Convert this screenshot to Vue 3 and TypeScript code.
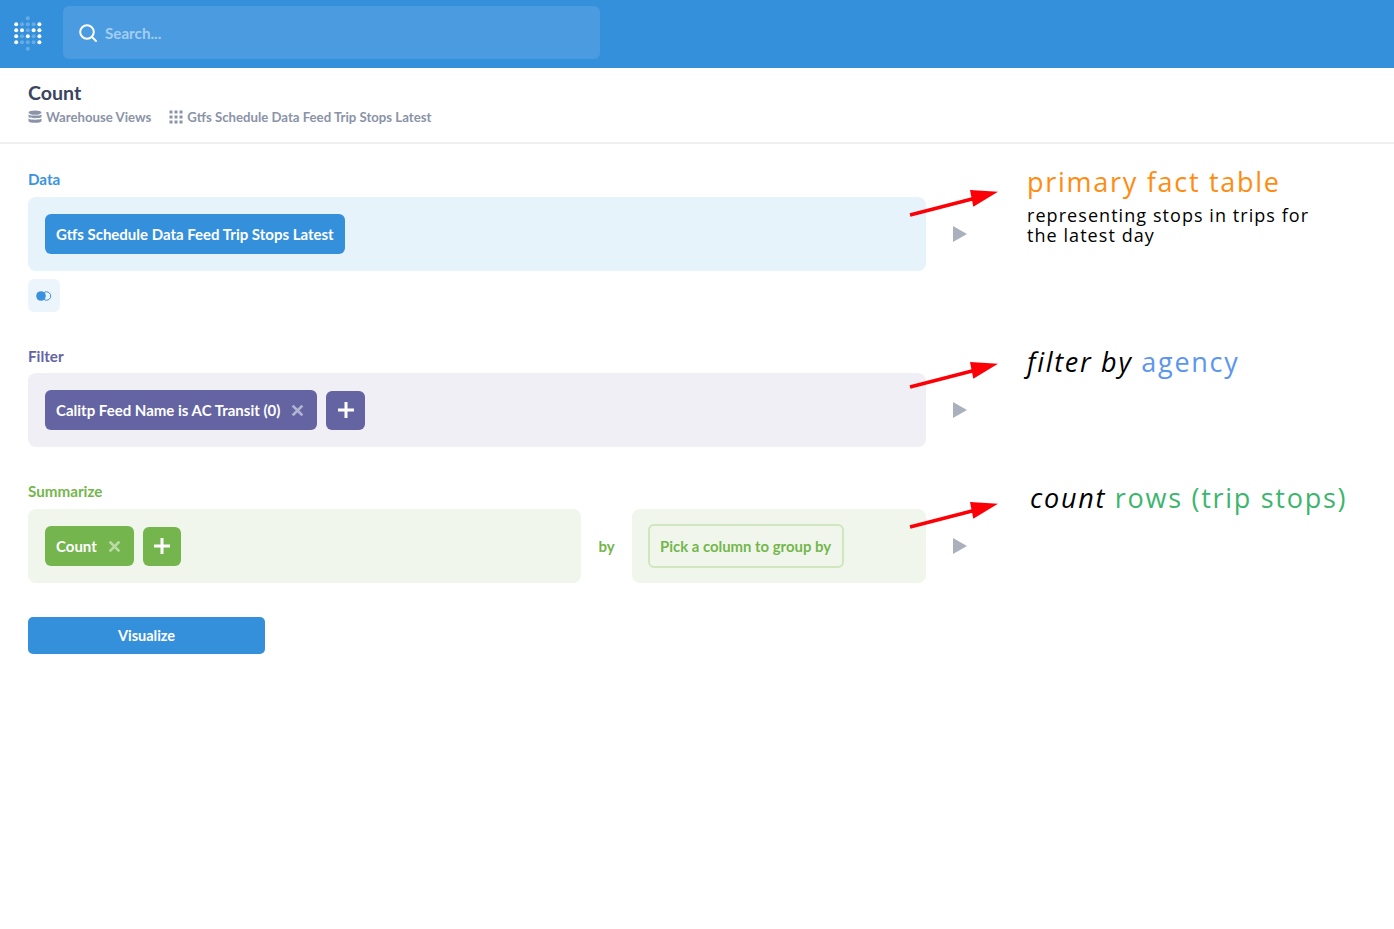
<script setup lang="ts">
const bright = new Set(['0,0', '0,1', '0,2', '0,3', '4,0', '4,1', '4,2', '4,3', '1,1', '3,1', '2,2'])
const dots: { x: number; y: number; on: boolean }[] = []
for (let c = 0; c < 5; c++) {
  for (let r = 0; r < 4; r++) {
    dots.push({ x: 2.2 + c * 5.8, y: 8.2 + r * 6, on: bright.has(`${c},${r}`) })
  }
}
const arrowTops = [187, 359, 499]
</script>

<template>
  <div class="page">
    <header class="topbar">
      <svg class="logo" width="30" height="36" viewBox="0 0 30 36">
        <circle cx="13.8" cy="2.3" r="2" fill="#fff" opacity=".25" />
        <circle cx="13.8" cy="32.7" r="2" fill="#fff" opacity=".25" />
        <circle
          v-for="(d, i) in dots"
          :key="i"
          :cx="d.x"
          :cy="d.y"
          r="2"
          fill="#fff"
          :opacity="d.on ? 1 : 0.25"
        />
      </svg>
      <div class="search">
        <svg width="20" height="20" viewBox="0 0 20 20" fill="none" stroke="#fff" stroke-width="2">
          <circle cx="9" cy="9" r="6.8" />
          <path d="M14 14l4 4" stroke-linecap="round" />
        </svg>
        <span>Search...</span>
      </div>
    </header>

    <section class="head">
      <h1>Count</h1>
      <div class="crumbs">
        <span class="crumb">
          <svg width="14" height="14" viewBox="0 0 14 14" fill="#8a93a8">
            <ellipse cx="7" cy="2.6" rx="6.5" ry="2.2" />
            <path d="M.5 4.4C1.5 6 12.5 6 13.5 4.4V7C12.5 8.6 1.5 8.6 .5 7zM.5 8.5C1.5 10.1 12.5 10.1 13.5 8.5V11.2C12.5 13.4 1.5 13.4 .5 11.2z" />
          </svg>
          Warehouse Views
        </span>
        <span class="crumb">
          <svg width="14" height="14" viewBox="0 0 14 14" fill="#8a93a8">
            <rect v-for="n in 9" :key="n" :x="0.5 + ((n - 1) % 3) * 5" :y="0.5 + Math.floor((n - 1) / 3) * 5" width="3" height="3" />
          </svg>
          Gtfs Schedule Data Feed Trip Stops Latest
        </span>
      </div>
    </section>

    <main class="body">
      <div class="step">
        <div class="label data-label">Data</div>
        <div class="row">
          <div class="panel data-panel wide">
            <span class="pill data-pill">Gtfs Schedule Data Feed Trip Stops Latest</span>
          </div>
          <span class="play"></span>
        </div>
        <div class="join">
          <svg width="16" height="10" viewBox="0 0 16 10">
            <circle cx="10.5" cy="5" r="4.2" fill="none" stroke="#3a91dc" stroke-width="1" />
            <circle cx="5" cy="5" r="4.8" fill="#3a91dc" />
          </svg>
        </div>
      </div>

      <div class="step filter-step">
        <div class="label filter-label">Filter</div>
        <div class="row">
          <div class="panel filter-panel wide">
            <span class="pill filter-pill">
              Calitp Feed Name is AC Transit (0)
              <svg class="x" width="13" height="13" viewBox="0 0 12 12"><path d="M1.5 1.5l9 9M10.5 1.5l-9 9" stroke="#fff" stroke-opacity=".5" stroke-width="2.6" /></svg>
            </span>
            <span class="add filter-pill">
              <svg width="18" height="18" viewBox="0 0 18 18"><path d="M9 1v16M1 9h16" stroke="#fff" stroke-width="3" /></svg>
            </span>
          </div>
          <span class="play"></span>
        </div>
      </div>

      <div class="step sum-step">
        <div class="label sum-label">Summarize</div>
        <div class="row">
          <div class="sum-row">
            <div class="panel sum-panel sum-left">
              <span class="pill green-pill">
                Count
                <svg class="x" width="13" height="13" viewBox="0 0 12 12"><path d="M1.5 1.5l9 9M10.5 1.5l-9 9" stroke="#fff" stroke-opacity=".5" stroke-width="2.6" /></svg>
              </span>
              <span class="add green-pill">
                <svg width="18" height="18" viewBox="0 0 18 18"><path d="M9 1v16M1 9h16" stroke="#fff" stroke-width="3" /></svg>
              </span>
            </div>
            <span class="by">by</span>
            <div class="panel sum-panel sum-right">
              <span class="pick">Pick a column to group by</span>
            </div>
          </div>
          <span class="play"></span>
        </div>
      </div>

      <button class="visualize">Visualize</button>
    </main>

    <svg
      v-for="t in arrowTops"
      :key="t"
      class="arrow"
      :style="{ top: t + 'px' }"
      width="94"
      height="32"
      viewBox="0 0 94 32"
    >
      <path d="M4 28L68 11.5" stroke="#fb0007" stroke-width="3.5" />
      <path d="M92 4.7L64 3L67.3 19.7z" fill="#fb0007" />
    </svg>

    <div class="note note-1">
      <div class="big orange">primary fact table</div>
      <div class="small">representing stops in trips for<br />the latest day</div>
    </div>
    <div class="note note-2 big"><i>filter by</i> <span class="blue">agency</span></div>
    <div class="note note-3 big"><i>count</i> <span class="teal">rows (trip stops)</span></div>
  </div>
</template>

<style>
html, body { margin: 0; background: #fff; }
</style>

<style scoped>
.page {
  position: relative;
  height: 929px;
  overflow: hidden;
  font-family: Lato, "Liberation Sans", sans-serif;
  color: #2e3a59;
}
.topbar {
  height: 68px;
  box-sizing: border-box;
  background: #3590dc;
  display: flex;
  align-items: center;
  padding: 0 0 3px 14px;
}
.logo { margin-top: 3px; }
.search {
  margin-left: 19px;
  width: 537px;
  height: 53px;
  box-sizing: border-box;
  background: #4a9be0;
  border-radius: 6px;
  display: flex;
  align-items: center;
  gap: 7px;
  padding-left: 15px;
  color: #a4cdf0;
  font-size: 15.2px;
  font-weight: 700;
}
.head {
  height: 76px;
  box-sizing: border-box;
  border-bottom: 2px solid #eeeff1;
  padding: 12px 28px 0;
}
h1 {
  margin: 0;
  font-size: 19.6px;
  line-height: 25px;
  font-weight: 700;
  color: #3a4560;
}
.crumbs {
  display: flex;
  gap: 18px;
  margin-top: 3px;
  font-size: 13.2px;
  line-height: 18px;
  font-weight: 700;
  color: #8a93a8;
}
.crumb { display: flex; align-items: center; gap: 4px; }
.body { padding: 26px 28px 0; }
.label {
  font-size: 15.2px;
  line-height: 18px;
  font-weight: 700;
  margin-bottom: 9px;
}
.data-label { color: #3a94de; }
.filter-label { color: #6464a3; margin-bottom: 8px; }
.sum-label { color: #74b64d; }
.filter-step { margin-top: 35px; }
.sum-step { margin-top: 35px; }
.row { display: flex; align-items: center; }
.panel {
  height: 74px;
  box-sizing: border-box;
  border-radius: 8px;
  display: flex;
  align-items: center;
  padding-left: 17px;
  gap: 9px;
}
.wide { width: 898px; }
.data-panel { background: #e6f3fb; }
.filter-panel { background: #f0eff5; }
.sum-panel { background: #f1f6ec; }
.sum-row { width: 898px; display: flex; align-items: center; }
.sum-left { width: 553px; }
.by {
  width: 51px;
  text-align: center;
  font-size: 15px;
  font-weight: 700;
  color: #74b64d;
}
.sum-right { width: 294px; padding-left: 16px; }
.pick {
  height: 44px;
  box-sizing: border-box;
  display: flex;
  align-items: center;
  padding: 0 11px 0 10px;
  border: 2px solid #cfe6bf;
  border-radius: 6px;
  font-size: 14.9px;
  font-weight: 700;
  color: #74b64d;
}
.pill {
  height: 40px;
  display: inline-flex;
  align-items: center;
  box-sizing: border-box;
  padding: 0 11px;
  border-radius: 6px;
  color: #fff;
  font-size: 15px;
  font-weight: 700;
}
.pill .x { margin-left: 11px; margin-right: 2px; }
.data-pill { background: #3590dc; }
.filter-pill { background: #6464a3; }
.green-pill { background: #74b64d; }
.add {
  width: 38.5px;
  height: 39px;
  border-radius: 6px;
  display: inline-flex;
  align-items: center;
  justify-content: center;
}
.play {
  margin-left: 27px;
  width: 0;
  height: 0;
  border-left: 14px solid #abb0bd;
  border-top: 8px solid transparent;
  border-bottom: 8px solid transparent;
}
.join {
  width: 32px;
  height: 33px;
  margin-top: 8px;
  border-radius: 6px;
  background: #edf5fc;
  display: flex;
  align-items: center;
  justify-content: center;
}
.visualize {
  display: block;
  margin-top: 34px;
  width: 237px;
  height: 37px;
  border: 0;
  padding: 0;
  border-radius: 5px;
  background: #3590dc;
  color: #fff;
  font-family: inherit;
  font-size: 14.5px;
  font-weight: 700;
}
.arrow { position: absolute; left: 906px; }
.note {
  position: absolute;
  font-family: "Open Sans", "DejaVu Sans", sans-serif;
  white-space: nowrap;
  color: #000;
}
.big { font-size: 27px; line-height: 36px; letter-spacing: 1.72px; }
.small { font-size: 18px; line-height: 20px; letter-spacing: 1.06px; margin-top: 5px; }
.note-1 { left: 1027px; top: 164px; }
.note-2 { left: 1027px; top: 344px; }
.note-3 { left: 1030px; top: 480px; }
.orange { color: #ff8c0f; }
.blue { color: #5c96ef; }
.teal { color: #3db56f; }
</style>
